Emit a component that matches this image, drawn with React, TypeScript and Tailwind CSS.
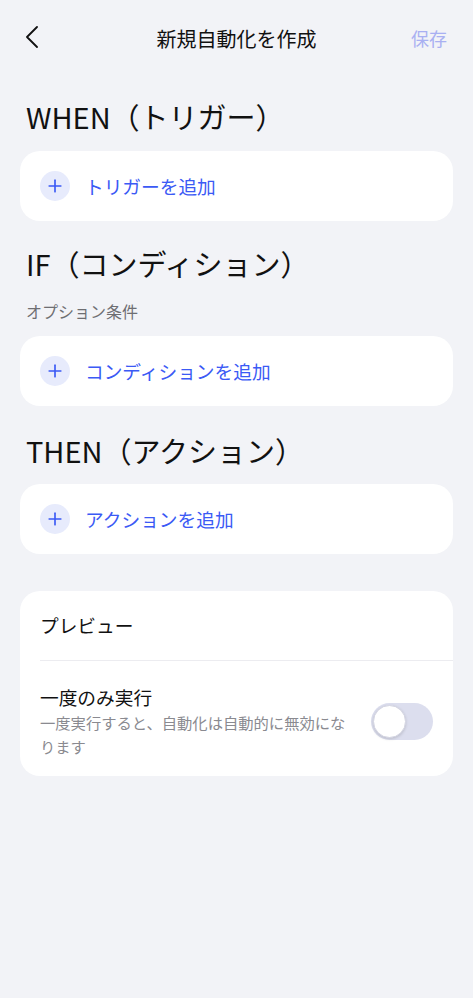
import { Plus } from 'lucide-react';

const font = { fontFamily: '"Noto Sans CJK JP", "Noto Sans", sans-serif' };

function AddCard({ label }: { label: string }) {
  return (
    <div className="flex h-[70px] items-center gap-[15px] rounded-[20px] bg-white px-5">
      <span className="flex h-[30px] w-[30px] items-center justify-center rounded-full bg-[#e7ebfc]">
        <Plus size={20} strokeWidth={2} className="text-[#3b5af5]" />
      </span>
      <span className="text-[18.7px] leading-6 text-[#3b5af5]">{label}</span>
    </div>
  );
}

function Heading({ children }: { children: string }) {
  return <h2 className="h-9 text-[29px] leading-9 text-[#111]">{children}</h2>;
}

export default function App() {
  return (
    <div className="min-h-[998px] w-full bg-[#f2f3f7] px-5" style={font}>
      <header className="relative flex h-[78px] items-center justify-center">
        <svg width="14" height="22" viewBox="0 0 14 22" className="absolute left-[5px] top-[26px]" fill="none">
          <polyline points="12,1 2,11 12,21" stroke="#111" strokeWidth="1.8" strokeLinecap="round" strokeLinejoin="round" />
        </svg>
        <span className="text-[20px] text-[#111]">新規自動化を作成</span>
        <span className="absolute right-[6px] top-[26px] text-[18px] leading-6 text-[#a9b0f2]">保存</span>
      </header>

      <div className="mt-5 pl-[6px]">
        <Heading>WHEN（トリガー）</Heading>
      </div>
      <div className="mt-[17px]">
        <AddCard label="トリガーを追加" />
      </div>

      <div className="mt-6 pl-[6px]">
        <Heading>IF（コンディション）</Heading>
      </div>
      <p className="mt-[18px] pl-[6px] text-[16px] leading-6 text-[#6e6e72]">オプション条件</p>
      <div className="mt-[13px]">
        <AddCard label="コンディションを追加" />
      </div>

      <div className="mt-[26px] pl-[6px]">
        <Heading>THEN（アクション）</Heading>
      </div>
      <div className="mt-4">
        <AddCard label="アクションを追加" />
      </div>

      <div className="mt-[37px] rounded-[20px] bg-white pl-5">
        <div className="flex h-[69px] items-center text-[18.7px] text-[#111]">プレビュー</div>
        <div className="h-px bg-[#ececf0]" />
        <div className="flex items-center gap-4 pb-[18px] pr-5 pt-[23px]">
          <div className="flex-1">
            <div className="text-[18.7px] leading-[26px] text-[#111]">一度のみ実行</div>
            <div className="text-[15.3px] leading-6 text-[#8a8a90]">
              一度実行すると、自動化は自動的に無効になります
            </div>
          </div>
          <button className="flex h-[37px] w-[62px] shrink-0 items-center rounded-full bg-[#dcdeee] p-[2px]">
            <span className="h-[33px] w-[33px] rounded-full border border-[#d4d5e2] bg-white shadow-[0_1px_3px_rgba(0,0,0,0.15)]" />
          </button>
        </div>
      </div>
    </div>
  );
}
